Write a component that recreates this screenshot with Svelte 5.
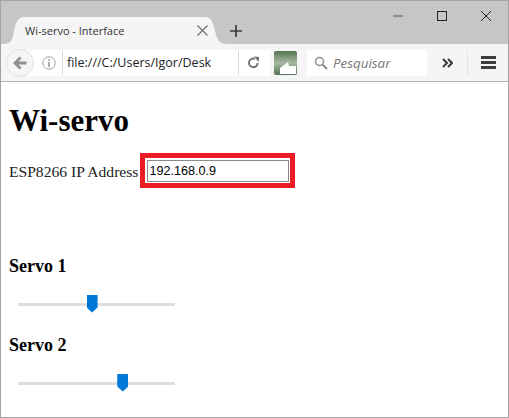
<script>
  let ip = $state('192.168.0.9');
  let servo1 = $state(47);
  let servo2 = $state(68);
</script>

<div class="window">
  <header class="titlebar">
    <div class="tab">
      <svg class="tab-shape" viewBox="0 0 222 27" width="222" height="27"><path d="M0 27 C7 27 9 22 10 14 C12 5 14 0 20 0 H201 C207 0 209 5 211 14 C213 22 215 27 222 27 Z" fill="#f5f5f5"/></svg>
      <span class="tab-title">Wi-servo - Interface</span>
      <svg class="tab-close" viewBox="0 0 11 11" width="11" height="11"><path d="M0.5 0.5 L10.5 10.5 M10.5 0.5 L0.5 10.5" stroke="#707070" stroke-width="1.2" fill="none"/></svg>
    </div>
    <svg class="new-tab" viewBox="0 0 12 12" width="12" height="12"><path d="M6 0 V12 M0 6 H12" stroke="#3c3c3c" stroke-width="1.7" fill="none"/></svg>
    <div class="caption">
      <svg viewBox="0 0 10 10" width="10" height="10"><path d="M0 5 H10" stroke="#555" stroke-width="1"/></svg>
      <svg viewBox="0 0 10 10" width="10" height="10"><rect x="0.5" y="0.5" width="9" height="9" stroke="#222" fill="none"/></svg>
      <svg viewBox="0 0 10 10" width="10" height="10"><path d="M0 0 L10 10 M10 0 L0 10" stroke="#222" stroke-width="1" fill="none"/></svg>
    </div>
  </header>

  <nav class="toolbar">
    <div class="urlbar">
      <span class="back">
        <svg viewBox="0 0 14 14" width="14" height="14"><path d="M7.5 1.5 L2 7 L7.5 12.5 M2.5 7 H13.5" stroke="#8f8f8f" stroke-width="2.8" fill="none"/></svg>
      </span>
      <svg class="info" viewBox="0 0 14 14" width="14" height="14"><circle cx="7" cy="7" r="6.2" stroke="#a0a0a0" fill="none"/><path d="M7 6 V11 M7 3.2 V4.9" stroke="#8a8a8a" stroke-width="1.4"/></svg>
      <span class="url">file:///C:/Users/Igor/Desk</span>
      <svg class="reload" viewBox="0 0 14 14" width="13" height="13"><path d="M11.5 7.5 A4.7 4.7 0 1 1 8.5 3" stroke="#707070" stroke-width="2" fill="none"/><path d="M7.5 0.5 L13 1 L12.5 6.5 Z" fill="#707070"/></svg>
    </div>
    <svg class="ext" viewBox="0 0 23 24" width="23" height="24">
      <defs>
        <linearGradient id="g" x1="0" y1="0" x2="0" y2="1"><stop offset="0" stop-color="#55744f"/><stop offset="0.5" stop-color="#a7b8a2"/><stop offset="1" stop-color="#557255"/></linearGradient>
      </defs>
      <rect width="23" height="24" rx="2" fill="url(#g)"/>
      <path d="M6 23 V17 L14 11 L15 15 H22 V23 Z" fill="#fff"/>
    </svg>
    <div class="search">
      <svg viewBox="0 0 14 14" width="14" height="14"><circle cx="5.5" cy="5.5" r="4" stroke="#8d8d8d" stroke-width="1.5" fill="none"/><path d="M8.5 8.5 L13 13" stroke="#8d8d8d" stroke-width="2"/></svg>
      <span>Pesquisar</span>
    </div>
    <svg class="more" viewBox="0 0 11 10" width="11" height="10"><path d="M1 1 L5 5 L1 9 M6 1 L10 5 L6 9" stroke="#3a3a3a" stroke-width="2" fill="none"/></svg>
    <div class="menu"><i></i><i></i><i></i></div>
  </nav>

  <main class="page">
    <h1>Wi-servo</h1>
    <div class="ip-row">
      <label for="ip">ESP8266 IP Address</label>
      <span class="highlight"><input id="ip" type="text" bind:value={ip} /></span>
    </div>
    <section class="servo first">
      <h3>Servo 1</h3>
      <input class="slider" type="range" min="0" max="100" bind:value={servo1} />
    </section>
    <section class="servo">
      <h3>Servo 2</h3>
      <input class="slider" type="range" min="0" max="100" bind:value={servo2} />
    </section>
  </main>
</div>

<style>
  :global(body) { margin: 0; background: #fff; }
  .window {
    box-sizing: border-box;
    width: 509px;
    height: 418px;
    display: flex;
    flex-direction: column;
    border: 1px solid #a3a3a3;
    overflow: hidden;
    font-family: "Open Sans", "Liberation Sans", sans-serif;
  }
  .titlebar {
    height: 43px;
    flex: none;
    background: #c6c6c6;
    display: flex;
    align-items: flex-end;
    padding-left: 3px;
    box-sizing: border-box;
  }
  .tab {
    box-sizing: border-box;
    width: 222px;
    height: 27px;
    position: relative;
    display: flex;
    align-items: center;
    justify-content: space-between;
    padding: 0 18px 0 21px;
    flex: none;
  }
  .tab-shape { position: absolute; left: 0; top: 0; }
  .tab-title { position: relative; font-size: 11px; color: #333; white-space: nowrap; }
  .tab-close { position: relative; }
  .new-tab { margin: 0 0 7px 4px; }
  .caption {
    margin-left: auto;
    align-self: flex-start;
    display: flex;
    gap: 34px;
    padding: 10px 17px 0 0;
  }
  .toolbar {
    height: 38px;
    flex: none;
    box-sizing: border-box;
    background: #f5f5f5;
    border-bottom: 1px solid #b5b5b5;
    display: flex;
    align-items: center;
    padding-left: 5px;
  }
  .urlbar {
    box-sizing: border-box;
    width: 264px;
    height: 26px;
    background: #fff;
    border-radius: 13px 0 0 13px;
    display: flex;
    align-items: center;
    flex: none;
  }
  .back {
    box-sizing: border-box;
    width: 28px;
    height: 28px;
    border-radius: 50%;
    background: #f5f5f5;
    border: 1px solid #e2e2e2;
    display: flex;
    align-items: center;
    justify-content: center;
    flex: none;
  }
  .info { margin-left: 8px; flex: none; }
  .url {
    box-sizing: border-box;
    margin-left: 6px;
    padding-left: 4px;
    border-left: 1px solid #d8d8d8;
    border-right: 1px solid #d8d8d8;
    font-size: 12.5px;
    line-height: 24px;
    color: #222;
    white-space: nowrap;
    width: 177px;
    flex: none;
  }
  .reload { margin-left: 8px; flex: none; }
  .ext { margin-left: 4px; flex: none; }
  .search {
    box-sizing: border-box;
    width: 120px;
    height: 26px;
    margin-left: 10px;
    background: #fff;
    display: flex;
    align-items: center;
    gap: 5px;
    padding-left: 7px;
    font-size: 13.4px;
    font-style: italic;
    color: #777;
    flex: none;
  }
  .more { margin-left: 15px; flex: none; }
  .menu {
    box-sizing: content-box;
    margin-left: 14px;
    padding-left: 13px;
    border-left: 1px solid #e4e4e4;
    display: flex;
    flex-direction: column;
    gap: 2px;
    width: 15px;
    height: 26px;
    justify-content: center;
    flex: none;
  }
  .menu i { display: block; height: 3px; background: #3c3c3c; }
  .page {
    flex: 1;
    padding: 0 8px;
    background: #fff;
    font-family: "Liberation Serif", serif;
    color: #000;
    font-size: 16px;
  }
  h1 { font-size: 31px; line-height: 37px; margin: 20px 0 0; font-weight: bold; }
  .ip-row { display: flex; align-items: center; margin-top: 14px; height: 35px; }
  label { font-size: 15.6px; color: #222; padding-top: 2px; }
  .highlight {
    box-sizing: border-box;
    margin-left: 2px;
    border: 5px solid #ec1c24;
    padding: 2px 1px 1px 2px;
    background: #fff;
    display: flex;
  }
  #ip {
    box-sizing: border-box;
    width: 142px;
    height: 22px;
    margin: 0;
    padding: 1px 1px;
    border: 1px solid #8a8a8a;
    border-radius: 0;
    font-family: "Liberation Sans", sans-serif;
    font-size: 12.6px;
    color: #000;
    outline: none;
  }
  .servo { margin-top: 21px; }
  .servo.first { margin-top: 68px; }
  h3 { font-size: 18px; line-height: 21px; margin: 0; font-weight: bold; }
  .slider {
    -webkit-appearance: none;
    appearance: none;
    display: block;
    width: 157px;
    height: 20px;
    margin: 17px 0 0 9px;
    background: transparent;
  }
  .slider::-webkit-slider-runnable-track { height: 3px; background: #dedede; }
  .slider::-webkit-slider-thumb {
    -webkit-appearance: none;
    width: 11px;
    height: 18px;
    margin-top: -8px;
    background: #0078d7;
    clip-path: polygon(0 0, 100% 0, 100% 72%, 50% 100%, 0 72%);
  }
</style>
